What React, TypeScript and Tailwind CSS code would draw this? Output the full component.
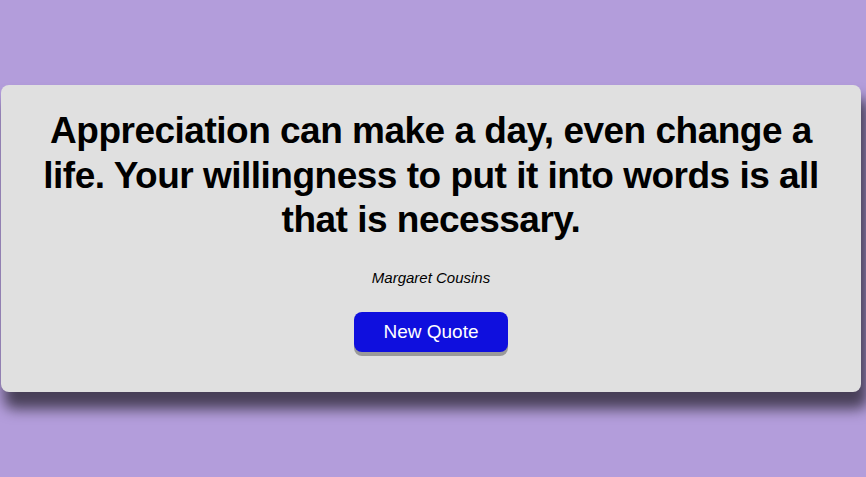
export default function App() {
  return (
    <div className="flex h-[477px] w-full items-center bg-[#b39ddb] pl-[1px] font-['Liberation_Sans',Arial,sans-serif]">
      <div className="flex w-[860px] flex-col items-center rounded-lg bg-[#e0e0e0] px-[30px] pt-[24px] pb-[40px] shadow-[5px_15px_14px_2px_rgba(0,0,0,0.6)]">
        <h1 className="text-center text-[37px] leading-[44.5px] font-bold tracking-[-0.5px] text-black">
          Appreciation can make a day, even change a life. Your willingness to put it into words is all that is necessary.
        </h1>
        <p className="mt-[26px] text-[15px] leading-[17px] italic text-black">Margaret Cousins</p>
        <button className="mt-[26px] h-[40px] w-[154px] rounded-lg bg-[#0f0fde] text-[19px] text-white shadow-[0_4px_0_#9a9a9a]">
          New Quote
        </button>
      </div>
    </div>
  );
}
